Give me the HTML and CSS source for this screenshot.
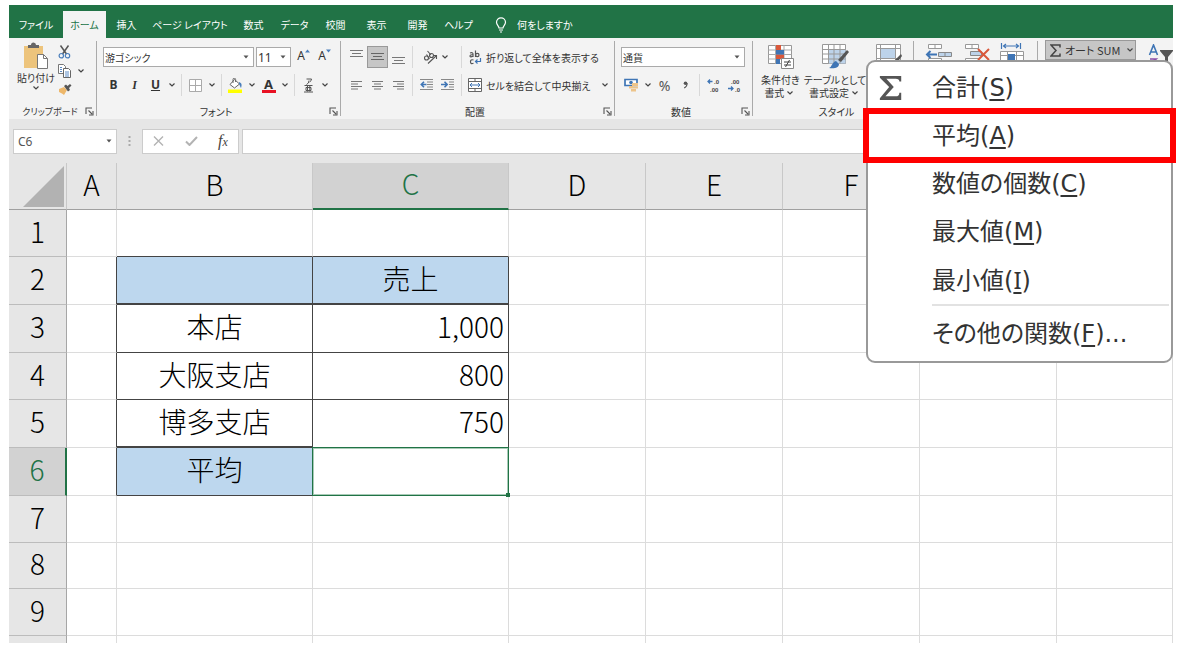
FILE: index.html
```html
<!DOCTYPE html>
<html lang="ja">
<head>
<meta charset="utf-8">
<title>オート SUM - 平均</title>
<link rel="stylesheet" href="styles.css">
</head>
<body>
<svg class="defs" aria-hidden="true">
  <symbol id="chev" viewBox="0 0 8 6"><path d="M1.500 1.500 4 4l2.500-2.500" fill="none" stroke="#444" stroke-width="1.200"/></symbol>
  <symbol id="tri" viewBox="0 0 6 4"><path d="M.5.5h5L3 3.500z" fill="#555"/></symbol>
  <symbol id="launch" viewBox="0 0 9 9"><path d="M1 7V1h6M3.500 3.500 7 7M8 4v4H4" fill="none" stroke="#555" stroke-width="1.100"/></symbol>
</svg>
<div class="window">
  <nav class="tabs">
    <a href="#" class="tab tab-file">ファイル</a>
    <a href="#" class="tab tab-home active">ホーム</a>
    <a href="#" class="tab">挿入</a>
    <a href="#" class="tab tab-wide">ページ レイアウト</a>
    <a href="#" class="tab">数式</a>
    <a href="#" class="tab">データ</a>
    <a href="#" class="tab">校閲</a>
    <a href="#" class="tab">表示</a>
    <a href="#" class="tab">開発</a>
    <a href="#" class="tab">ヘルプ</a>
    <a href="#" class="tab tab-ask"><svg width="14" height="16" viewBox="0 0 14 16"><path d="M5 11C5 9 2.500 8 2.500 5.300a4.500 4.500 0 0 1 9 0C11.500 8 9 9 9 11zM5 13h4M6 15h2" fill="none" stroke="#fff" stroke-width="1.200"/></svg>何をしますか</a>
  </nav>

  <div class="ribbon">
    <section class="group g-clip">
      <div class="clip-body">
        <button class="big paste">
          <svg width="28" height="29" viewBox="0 0 28 29"><path d="M2 4h19v22H2z" fill="#edc47c"/><path d="M6 6V3h3a2.500 2.500 0 0 1 5 0h3v3z" fill="#666"/><path d="M15.500 12.500h6l4 4v10h-10z" fill="#fff" stroke="#777"/><path d="M21.500 12.500v4h4" fill="none" stroke="#777"/></svg>
          <span>貼り付け</span><svg class="chev"><use href="#chev"/></svg>
        </button>
        <div class="clip-side">
          <button aria-label="切り取り"><svg width="13" height="14" viewBox="0 0 13 14"><path d="M2.500.5 8.500 9M10.500.5 4.500 9" fill="none" stroke="#555" stroke-width="1.500"/><circle cx="3.300" cy="10.700" r="2.200" fill="none" stroke="#4a7ebb" stroke-width="1.200"/><circle cx="9.500" cy="10.700" r="2.200" fill="none" stroke="#4a7ebb" stroke-width="1.200"/></svg></button>
          <button aria-label="コピー"><svg width="13" height="14" viewBox="0 0 13 14"><path d="M.5.5h5l2 2v7h-7z" fill="#fff" stroke="#777"/><path d="M5.500 4.500h5l2 2v7h-7z" fill="#fff" stroke="#666"/><path d="M2 3.500h2M2 5.500h2M2 7.500h2M7 8h4M7 10h4M7 12h4" stroke="#5b8ac4"/></svg></button><svg class="chev"><use href="#chev"/></svg>
          <button aria-label="書式のコピー"><svg width="14" height="11" viewBox="0 0 14 11"><path d="M1 5 6 3l3 3-3 5-2-1.500L1 8z" fill="#edb76a"/><path d="m6 2 2-1.500 1.500 1.500L12 0l1.500 1.500-2.500 2.500 1 2-2 1.500z" fill="#555"/></svg></button>
        </div>
      </div>
      <footer><span>クリップボード</span><button class="launch" aria-label="クリップボードの設定"><svg width="9" height="9"><use href="#launch"/></svg></button></footer>
    </section>

    <section class="group g-font">
      <div class="rows">
        <div class="row">
          <label class="combo c-font"><select aria-label="フォント"><option>游ゴシック</option></select><svg class="tri"><use href="#tri"/></svg></label>
          <label class="combo c-size"><select aria-label="フォント サイズ"><option>11</option></select><svg class="tri"><use href="#tri"/></svg></label>
          <button class="tool grow" aria-label="フォント サイズの拡大">A<svg width="5" height="4" viewBox="0 0 5 4"><path d="M0 3.500 2.500.5 5 3.500z" fill="#4a7ebb"/></svg></button>
          <button class="tool grow" aria-label="フォント サイズの縮小">A<svg width="5" height="4" viewBox="0 0 5 4"><path d="M0 .5h5L2.500 3.500z" fill="#4a7ebb"/></svg></button>
        </div>
        <div class="row">
          <button class="tool b">B</button><button class="tool i">I</button><button class="tool u">U</button><svg class="chev"><use href="#chev"/></svg><i class="sep"></i>
          <button class="tool" aria-label="罫線"><svg width="13" height="13" viewBox="0 0 13 13"><path d="M.5.5h12v12H.5zM6.500.5v12M.5 6.500h12" fill="#fff" stroke="#aaa"/></svg></button><svg class="chev"><use href="#chev"/></svg><i class="sep"></i>
          <button class="tool" aria-label="塗りつぶし"><svg width="15" height="15" viewBox="0 0 15 15"><path d="M6.500 1.500 11.500 6 6.500 10 2 6.500z" fill="#fff" stroke="#666"/><path d="M5 5V1.500a1.300 1.300 0 0 1 2.600 0V4" fill="none" stroke="#666"/><path d="M11 4c3 1 3 3 2 6-1-1-1-3-2-4z" fill="#4a7ebb"/><path d="M0 11.500h14V15H0z" fill="#ffff00"/></svg></button><svg class="chev"><use href="#chev"/></svg>
          <button class="tool fc" aria-label="フォントの色"><span>A</span></button><svg class="chev"><use href="#chev"/></svg><i class="sep"></i>
          <button class="tool ruby" aria-label="ふりがなの表示"><svg width="11" height="15" viewBox="0 0 11 15"><path d="M3.500 1h5q0 2-2 3M6 2.500q0 3-2.500 4M1.500 7.500h8M3 9.500h5v3H3zM4.500 7.500v6M6.800 7.500v6M1 14h9" fill="none" stroke="#555"/></svg></button><svg class="chev"><use href="#chev"/></svg>
        </div>
      </div>
      <footer><span>フォント</span><button class="launch" aria-label="フォントの設定"><svg width="9" height="9"><use href="#launch"/></svg></button></footer>
    </section>

    <section class="group g-align">
      <div class="rows">
        <div class="row">
          <button class="tool" aria-label="上揃え"><svg width="13" height="16" viewBox="0 0 13 16"><path d="M0 1.500h13M2 4.500h9M0 7.500h13" stroke="#777"/></svg></button>
          <button class="tool on" aria-label="上下中央揃え"><svg width="13" height="16" viewBox="0 0 13 16"><path d="M0 4.500h13M2 7.500h9M0 10.500h13" stroke="#666"/></svg></button>
          <button class="tool" aria-label="下揃え"><svg width="13" height="16" viewBox="0 0 13 16"><path d="M0 8.500h13M2 11.500h9M0 14.500h13" stroke="#777"/></svg></button><i class="sep"></i>
          <button class="tool orient" aria-label="方向"><svg width="16" height="15" viewBox="0 0 16 15"><g fill="none" stroke="#555" stroke-width="1.100"><circle cx="3.500" cy="8" r="2"/><path d="M3.500 4.500 6.500 9"/><circle cx="8.500" cy="5.500" r="2"/><path d="M4.500 1 8 5M5 13.500 13 6M10 5.500h3.500V9"/></g></svg><svg class="chev"><use href="#chev"/></svg></button><i class="sep"></i>
          <button class="wide"><svg width="14" height="15" viewBox="0 0 14 15"><g fill="none" stroke="#555" stroke-width="1.200"><path d="M2 3q3-1 3 1v3M5 4.800Q2 4.500 2 6t3 .3M7.500.5V7"/><circle cx="9.300" cy="5" r="1.700"/><path d="M5.500 10q-3-1-3 1.700t3 1.500"/></g><path d="M12.500 8v3.500H7.500M9.500 9.500l-2 2 2 2" fill="none" stroke="#3f75b5" stroke-width="1.200"/></svg>折り返して全体を表示する</button>
        </div>
        <div class="row">
          <button class="tool" aria-label="左揃え"><svg width="11" height="11" viewBox="0 0 11 11"><path d="M0 1.500h11M0 4h7M0 6.500h11M0 9h7" stroke="#777"/></svg></button>
          <button class="tool" aria-label="中央揃え"><svg width="11" height="11" viewBox="0 0 11 11"><path d="M0 1.500h11M2 4h7M0 6.500h11M2 9h7" stroke="#777"/></svg></button>
          <button class="tool" aria-label="右揃え"><svg width="11" height="11" viewBox="0 0 11 11"><path d="M0 1.500h11M4 4h7M0 6.500h11M4 9h7" stroke="#777"/></svg></button><i class="sep"></i>
          <button class="tool" aria-label="インデントを減らす"><svg width="13" height="12" viewBox="0 0 13 12"><path d="M0 .5h13M7 3h6M7 5.500h6M7 8h6M0 10.500h13" stroke="#888"/><path d="M6.500 5.500h-5M4 2.800 1.300 5.500 4 8.200" fill="none" stroke="#3f75b5" stroke-width="1.600"/></svg></button>
          <button class="tool" aria-label="インデントを増やす"><svg width="13" height="12" viewBox="0 0 13 12"><path d="M0 .5h13M8 3h5M8 5.500h5M8 8h5M0 10.500h13" stroke="#888"/><path d="M0 5.500h5.500M3.500 2.800 6.200 5.500 3.500 8.200" fill="none" stroke="#3f75b5" stroke-width="1.600"/></svg></button><i class="sep"></i>
          <button class="wide"><svg width="14" height="14" viewBox="0 0 14 14"><path d="M.5.5h13v13H.5zM.5 3.500h13M.5 10.500h13M7 .5v3M7 10.500v3" fill="#fff" stroke="#666"/><path d="M2 7h10M4 5 2 7l2 2M10 5l2 2-2 2" fill="none" stroke="#3f75b5"/></svg>セルを結合して中央揃え</button><svg class="chev push"><use href="#chev"/></svg>
        </div>
      </div>
      <footer><span>配置</span><button class="launch" aria-label="配置の設定"><svg width="9" height="9"><use href="#launch"/></svg></button></footer>
    </section>

    <section class="group g-num">
      <div class="rows">
        <div class="row">
          <label class="combo c-num"><select aria-label="数値の書式"><option>通貨</option></select><svg class="tri"><use href="#tri"/></svg></label>
        </div>
        <div class="row">
          <button class="tool" aria-label="通貨表示形式"><svg width="15" height="14" viewBox="0 0 15 14"><path d="M1 1.500h12v6H1z" fill="#fff" stroke="#3f75b5" stroke-width="1.700"/><circle cx="7" cy="4.500" r="1.800" fill="#3f75b5"/><path d="M8 5h6v3H8zM8 8.500h6v2H8zM5 8h4v2.500H5zM7 11h5v2.500H7z" fill="#edc48a"/></svg></button><svg class="chev"><use href="#chev"/></svg>
          <button class="tool pct">%</button><button class="tool comma" aria-label="桁区切りスタイル"><svg width="5" height="8" viewBox="0 0 5 8"><circle cx="2.500" cy="2.300" r="1.800" fill="#555"/><path d="M4.200 2.300q0 3-3 4.700" fill="none" stroke="#555" stroke-width="1.100"/></svg></button><i class="sep"></i>
          <button class="tool" aria-label="小数点以下の表示桁数を増やす"><svg width="13" height="14" viewBox="0 0 13 14"><text x="7" y="6" class="dec">.0</text><text x="3" y="14" class="dec">.00</text><path d="M5.500 3.500H1M3 1.500l-2 2 2 2" fill="none" stroke="#3f75b5" stroke-width="1.300"/></svg></button>
          <button class="tool" aria-label="小数点以下の表示桁数を減らす"><svg width="13" height="14" viewBox="0 0 13 14"><text x="3" y="6" class="dec">.00</text><text x="7" y="14" class="dec">.0</text><path d="M0 10.500h5M3 8.500l2 2-2 2" fill="none" stroke="#3f75b5" stroke-width="1.300"/></svg></button>
        </div>
      </div>
      <footer><span>数値</span><button class="launch" aria-label="数値の設定"><svg width="9" height="9"><use href="#launch"/></svg></button></footer>
    </section>

    <section class="group g-style">
      <div class="bigs">
        <button class="big"><svg width="27" height="26" viewBox="0 0 27 26"><path d="M1.500 1.500h23v18h-23z" fill="#fff" stroke="#999"/><path d="M1.500 6h23M1.500 10.500h23M1.500 15h23M8.500 1v19M17 1v19" stroke="#aaa"/><path d="M9 1h5v5H9zM9 10.500h8V15H9z" fill="#d9583b"/><path d="M9 6h8v4.500H9zM9 15h4v5H9z" fill="#3f75b5"/><path d="M14.500 14.500h12v10h-12z" fill="#fff" stroke="#888"/><path d="M17 18h7M17 21h7M22.500 16l-4 7" stroke="#444"/></svg><span>条件付き<br>書式<svg class="chev"><use href="#chev"/></svg></span></button>
        <button class="big"><svg width="28" height="26" viewBox="0 0 28 26"><path d="M1.500.5h23v19h-23z" fill="#fff" stroke="#999"/><path d="M7.500 5.500h17v14h-17z" fill="#bdd3ea"/><path d="M1.500 5.500h23M1.500 10h23M1.500 15h23M7.500.5v19M13 .5v19M19 .5v19" stroke="#999"/><path d="m26 6 2 2-8 10-3-2z" fill="#555"/><path d="M8 24c3-1 3-6 7-7l3 3c0 4-5 5-10 4z" fill="#3f75b5"/></svg><span>テーブルとして<br>書式設定<svg class="chev"><use href="#chev"/></svg></span></button>
        <button class="big"><svg width="27" height="26" viewBox="0 0 27 26"><path d="M1.500.5h24v18h-24z" fill="#fff" stroke="#999"/><path d="M6 5h14v9H6z" fill="#bdd3ea"/><path d="M1.500 4.500h24M1.500 14.500h24M5.500.5v18M20.500.5v18" stroke="#999"/><path d="m26 10 1 2-6 8-3-2z" fill="#555"/></svg><span>セルの<br>スタイル</span></button>
      </div>
      <footer><span>スタイル</span></footer>
    </section>

    <section class="group g-cells">
      <button aria-label="挿入"><svg width="28" height="20" viewBox="0 0 28 20"><path d="M3.500 1.500h13v4h-13zM10 1.500v4M3.500 15.500h13v4h-13z" fill="#fff" stroke="#999"/><path d="M13.500 9.500h13v4h-13zM20 9.500v4" fill="#bdd3ea" stroke="#888"/><path d="M12 11.500H2M5.500 8 2 11.500 5.500 15" fill="none" stroke="#3f75b5" stroke-width="2"/></svg></button>
      <button aria-label="削除"><svg width="28" height="20" viewBox="0 0 28 20"><path d="M3.500 1.500h13v4h-13zM10 1.500v4M3.500 15.500h13v4h-13z" fill="#fff" stroke="#999"/><path d="M8.500 8.500h11v4h-11z" fill="#bdd3ea" stroke="#888"/><path d="m16 6 11 11M27 6 16 17" stroke="#d9583b" stroke-width="2"/></svg></button>
      <button aria-label="書式"><svg width="26" height="20" viewBox="0 0 26 20"><path d="M1.500 8.500h23V20h-23z" fill="#fff" stroke="#999"/><path d="M1.500 12.500h23M8.500 8v12M17.500 8v12" stroke="#999"/><path d="M9 11h7v9H9z" fill="#3f75b5"/><path d="M4 3h16M7 1 4.500 3 7 5M17 1l2.500 2L17 5M2.500 0v6M21.500 0v6" fill="none" stroke="#3f75b5" stroke-width="1.200"/></svg></button>
    </section>

    <section class="g-edit">
      <button class="autosum" aria-expanded="true"><svg width="11" height="13" viewBox="0 0 11 13"><path d="M10 3.500V1H1l5 5.500L1 12h9V9.500" fill="none" stroke="#444" stroke-width="1.500"/></svg>オート SUM<svg class="chev"><use href="#chev"/></svg></button>
      <button class="sort" aria-label="並べ替えとフィルター"><svg width="25" height="20" viewBox="0 0 25 20"><path d="m1.500 11 4-10 4 10M3 8h5" fill="none" stroke="#3f75b5" stroke-width="1.600"/><path d="M2 15h6l-6 5" fill="none" stroke="#8b4fa8" stroke-width="1.700"/><path d="M12 6h13v1l-5 6v6h-3v-6l-5-6z" fill="#555"/></svg></button>
    </section>
  </div>

  <div class="formula">
    <label class="namebox"><input value="C6" aria-label="名前ボックス"><svg class="tri"><use href="#tri"/></svg></label>
    <svg class="dots" width="3" height="12" viewBox="0 0 3 12"><path d="M.5 1h2v2h-2zM.5 5h2v2h-2zM.5 9h2v2h-2z" fill="#aaa"/></svg>
    <div class="fxbox">
      <button aria-label="キャンセル"><svg width="11" height="10" viewBox="0 0 11 10"><path d="m1 .5 9 9M10 .5l-9 9" stroke="#b3b3b3" stroke-width="1.400"/></svg></button>
      <button aria-label="入力"><svg width="13" height="10" viewBox="0 0 13 10"><path d="m1 5.500 3.500 3.500L12 1" fill="none" stroke="#b3b3b3" stroke-width="2"/></svg></button>
      <button class="fx">f<small>x</small></button>
    </div>
    <input class="finput" aria-label="数式バー">
  </div>

  <div class="sheet">
    <table>
      <colgroup><col class="k-n"><col class="k-a"><col class="k-b"><col class="k-b"><col class="k-d"><col class="k-d"><col class="k-d"><col class="k-d"><col></colgroup>
      <thead><tr><th class="corner"><svg width="41" height="41" viewBox="0 0 41 41"><path d="M41 0v41H0z" fill="#b2b2b2"/></svg></th><th>A</th><th>B</th><th class="sel">C</th><th>D</th><th>E</th><th>F</th><th>G</th><th></th></tr></thead>
      <tbody>
        <tr><th>1</th><td></td><td class="bb"></td><td class="bb"></td><td></td><td></td><td></td><td></td><td></td></tr>
        <tr class="tall"><th>2</th><td class="br"></td><td class="bb2 br blue"></td><td class="bb2 br blue">売上</td><td></td><td></td><td></td><td></td><td></td></tr>
        <tr class="tall"><th>3</th><td class="br"></td><td class="bb br">本店</td><td class="bb br num">1,000</td><td></td><td></td><td></td><td></td><td></td></tr>
        <tr><th>4</th><td class="br"></td><td class="bb br">大阪支店</td><td class="bb br num">800</td><td></td><td></td><td></td><td></td><td></td></tr>
        <tr class="tall"><th>5</th><td class="br"></td><td class="bb2 br">博多支店</td><td class="bb br num">750</td><td></td><td></td><td></td><td></td><td></td></tr>
        <tr class="tall"><th class="sel">6</th><td class="br"></td><td class="bb br blue">平均</td><td class="cursor"></td><td></td><td></td><td></td><td></td><td></td></tr>
        <tr><th>7</th><td></td><td></td><td></td><td></td><td></td><td></td><td></td><td></td></tr>
        <tr class="short"><th>8</th><td></td><td></td><td></td><td></td><td></td><td></td><td></td><td></td></tr>
        <tr><th>9</th><td></td><td></td><td></td><td></td><td></td><td></td><td></td><td></td></tr>
        <tr><th></th><td></td><td></td><td></td><td></td><td></td><td></td><td></td><td></td></tr>
      </tbody>
    </table>
  </div>

  <div class="menu" role="menu">
    <button role="menuitem"><svg width="26" height="26" viewBox="0 0 26 28"><path d="M1 1h23v6h-2q0-3-4-3H8l8 9-9 10h11q4 0 4-4h2v8H1v-2l10-12L1 3z" fill="#555"/></svg><span>合計(<u>S</u>)</span></button>
    <button role="menuitem" class="marked"><span>平均(<u>A</u>)</span></button>
    <button role="menuitem"><span>数値の個数(<u>C</u>)</span></button>
    <button role="menuitem"><span>最大値(<u>M</u>)</span></button>
    <button role="menuitem"><span>最小値(<u class="slab">I</u>)</span></button>
    <hr>
    <button role="menuitem" class="more"><span>その他の関数(<u>F</u>)...</span></button>
  </div>
</div>
</body>
</html>
```
FILE: styles.css
```css
* { box-sizing: border-box; }
body {
  margin: 0;
  height: 100vh;
  padding: 5px 10px 6px 9px;
  background: #fff;
  color: #333;
  font-family: "Noto Sans CJK JP", sans-serif;
  font-size: 11px;
  font-feature-settings: "palt";
}
button, input, select {
  margin: 0;
  padding: 0;
  border: 0;
  background: none;
  color: inherit;
  font: inherit;
  font-feature-settings: inherit;
}
svg { flex: none; display: block; }
.defs { position: absolute; width: 0; height: 0; }
.window { position: relative; height: 100%; display: flex; flex-direction: column; }

.tabs { flex: none; display: flex; align-items: flex-end; height: 33px; background: #217346; font-size: 10px; }
.tab {
  display: flex;
  align-items: center;
  justify-content: center;
  width: 41px;
  height: 27px;
  color: #fff;
  text-decoration: none;
  white-space: nowrap;
}
.tab-file { width: 54px; }
.tab-home { width: 43px; }
.tab-wide { width: 86px; }
.tab.active { background: #f3f3f3; color: #217346; }
.tab-ask { width: auto; gap: 9px; margin-left: 15px; }

.ribbon { flex: none; display: flex; height: 81px; background: #f3f3f3; overflow: hidden; white-space: nowrap; }
.group { position: relative; flex: none; display: flex; flex-direction: column; justify-content: space-between; }
.group::after { content: ""; position: absolute; right: 0; top: 3px; bottom: 3px; width: 1px; background: #aaa; }
.group footer { display: flex; align-items: center; height: 15px; padding-left: 6px; font-size: 10px; line-height: 14px; }
.group footer span { flex: 1; text-align: center; }
.launch { width: 12px; }
.g-clip { width: 88px; }
.g-clip footer { font-size: 9px; }
.g-font { width: 244px; }
.g-align { width: 274px; }
.g-num { width: 138px; }
.g-style { width: 161px; }
.chev { width: 12px; height: 8px; padding: 1px 2px; }
.tri { width: 6px; height: 4px; margin-right: 4px; }
.sep { flex: none; width: 1px; height: 22px; margin: 0 3px; background: #d8d8d8; }

.clip-body { display: flex; padding: 4px 0 0 5px; }
.big { display: flex; flex-direction: column; align-items: center; line-height: 13px; font-size: 10px; }
.paste { width: 44px; }
.clip-side { display: grid; grid-template-columns: 17px 12px; grid-auto-rows: 19px; align-items: center; }
.clip-side button:first-child { grid-column: 1 / 3; }

.rows { display: flex; flex-direction: column; gap: 6px; padding: 8px 0 0 6px; }
.g-align .rows { padding-left: 5px; }
.row { display: flex; align-items: center; height: 22px; }
.tool { flex: none; display: flex; align-items: center; justify-content: center; width: 21px; height: 22px; }
.tool.on { background: #c6c6c6; border: 1px solid #999; }
.combo, .namebox { display: flex; align-items: center; background: #fff; border: 1px solid #aaa; }
.combo { height: 20px; margin-right: 2px; }
.combo select { flex: 1; min-width: 0; padding-left: 1px; appearance: none; font-size: 10px; }
.combo.c-size select { font: 12px "Noto Sans", sans-serif; }
.c-font { width: 151px; }
.c-size { width: 35px; }
.c-num { width: 124px; }
.grow { align-items: flex-start; font: 12px/20px "Noto Sans", sans-serif; }
.grow svg { margin-top: 3px; }
.b, .i, .u { font: bold 12px/20px "Noto Sans", sans-serif; }
.i { font-family: "Liberation Serif", serif; font-style: italic; }
.u { text-decoration: underline; }
.fc span { width: 14px; border-bottom: 3px solid #e81123; font: bold 13px/12px "Noto Sans", sans-serif; }
.orient { width: 42px; }
.wide { display: flex; align-items: center; gap: 4px; padding-left: 3px; font-size: 10px; }
.push { margin-left: 8px; }
.dec { font: bold 6px "Liberation Sans", sans-serif; fill: #444; }
.pct { font: 14px "Noto Sans", sans-serif; color: #555; }

.bigs { display: flex; gap: 4px; padding: 6px 0 0 8px; overflow: hidden; }
.bigs .big { text-align: center; gap: 3px; }
.bigs .big .chev { display: inline-block; }
.g-cells { width: 124px; flex-direction: row; justify-content: flex-start; align-items: flex-start; gap: 9px; padding: 5px 0 0 11px; }
.g-edit { flex: 1; display: flex; justify-content: space-between; align-items: flex-start; padding: 2px 0 0 7px; }
.autosum { display: flex; align-items: center; gap: 4px; width: 91px; height: 20px; padding-left: 4px; background: #c6c6c6; border: 1px solid #999; }
.autosum .chev { margin-left: auto; }
.sort { margin-top: 4px; }

.formula { flex: none; display: flex; align-items: center; height: 44px; padding-left: 4px; background: #e6e6e6; }
.namebox { width: 104px; height: 25px; border-color: #ccc; }
.namebox input { flex: 1; min-width: 0; padding-left: 4px; font: 12px "Noto Sans", sans-serif; color: #555; }
.dots { margin: 0 11px; }
.fxbox { display: flex; align-items: center; justify-content: space-around; width: 97px; height: 25px; background: #fff; border: 1px solid #ccc; }
.fx { font: italic 16px "Liberation Serif", serif; color: #444; }
.fx small { font-size: 12px; }
.finput { flex: 1; min-width: 0; height: 25px; margin-left: 3px; background: #fff; border: 1px solid #ccc; }

.sheet { flex: 1; min-height: 0; overflow: hidden; }
table { width: 100%; table-layout: fixed; border-collapse: separate; border-spacing: 0; font-size: 28px; font-weight: 300; line-height: 40px; color: #000; font-feature-settings: normal; }
.k-n { width: 58px; }
.k-a { width: 50px; }
.k-b { width: 196px; }
.k-d { width: 137px; }
th, td { height: 47px; padding: 0 0 5px; text-align: center; font-weight: 300; border-right: 1px solid #dcdcdc; border-bottom: 1px solid #dcdcdc; }
.tall th, .tall td { height: 48px; }
.short th, .short td { height: 46px; }
th { background: #e6e6e6; border-right-color: #a6a6a6; border-bottom-color: #bcbcbc; }
thead th { height: 46px; border-right-color: #c8c8c8; border-bottom-color: #a0a0a0; }
th.sel { background: #d2d2d2; color: #217346; }
thead th.sel { border-bottom: 2px solid #217346; }
tbody th.sel { border-right: 2px solid #217346; }
thead .corner { padding: 0; }
.corner svg { margin: 0 2px 0 auto; }
.bb { border-bottom-color: #444; }
.bb2 { border-bottom: 2px solid #444; }
.br { border-right-color: #444; }
.blue { background: #bdd7ee; }
.num { text-align: right; padding-right: 4px; }
.cursor { position: relative; }
.cursor::before { content: ""; position: absolute; inset: -1px; border: 1px solid #217346; outline: 1px solid #a8cbb7; outline-offset: -2px; }
.cursor::after { content: ""; position: absolute; right: -2px; bottom: -2px; width: 4px; height: 4px; background: #217346; }

.menu { position: absolute; top: 55px; right: 0; width: 307px; padding: 2px 0 0; background: #fff; border: 2px solid #999; border-radius: 9px; font-family: "DejaVu Sans", "Noto Sans CJK JP", sans-serif; font-size: 24px; color: #333; }
.menu button { position: relative; display: grid; grid-template-columns: 54px auto; align-items: center; width: 100%; height: 48px; padding-left: 10px; text-align: left; font-size: 24px; line-height: 32px; }
.menu span { grid-column: 2; }
.menu svg { grid-row: 1; }
.menu u { text-decoration-thickness: 2px; text-underline-offset: 3px; }
.menu .slab { font-family: "Noto Sans", sans-serif; }
.menu hr { height: 2px; margin: 0 2px 0 64px; border: 0; background: #e2e2e2; }
.menu .more { height: 55px; }
.marked::after { content: ""; position: absolute; inset: -4px -5px -3px -5px; border: 6px solid #f00; }
```
